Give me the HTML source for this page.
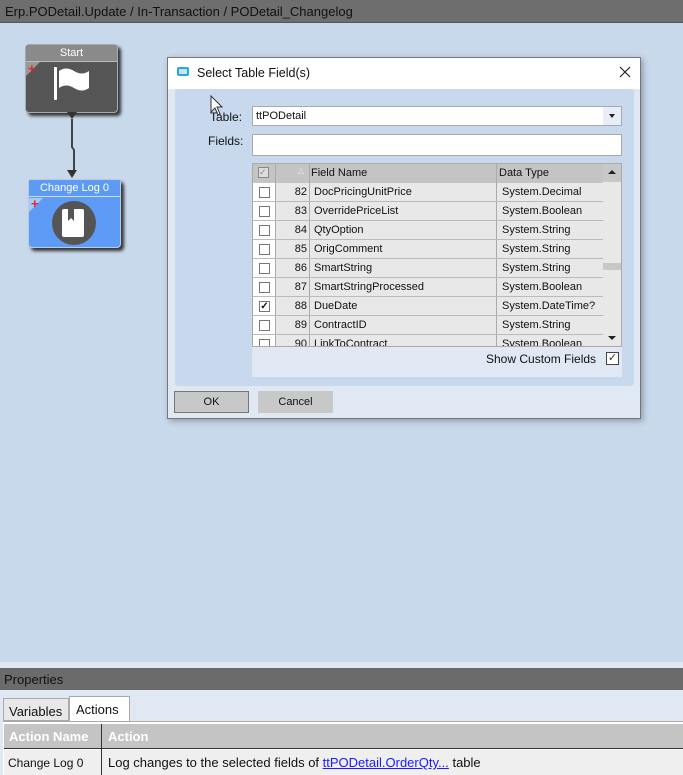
<!DOCTYPE html>
<html><head><style>
*{box-sizing:border-box;margin:0;padding:0}
body{width:683px;height:775px;overflow:hidden;background:#c9d9ec;font-family:"Liberation Sans",sans-serif;font-size:12px;color:#111;position:relative}
.a{position:absolute}
.cb{position:absolute;width:11px;height:11px;border:1px solid #777;background:#fff}
</style></head><body>
<div class="a" style="left:0;top:0;width:683px;height:23px;background:#6e6e6e;border-bottom:1px solid #555"></div>
<div class="a" style="left:5px;top:4px;font-size:13px;color:#111">Erp.PODetail.Update / In-Transaction / PODetail_Changelog</div>

<!-- Start node -->
<div class="a" style="left:25px;top:44px;width:93px;height:69px;background:#565656;border-radius:4px;border:1px solid #aaa;box-shadow:3px 3px 3px #333"></div>
<div class="a" style="left:26px;top:45px;width:91px;height:17px;background:#8a8a8a;border-radius:3px 3px 0 0;color:#fff;text-align:center;font-size:11px;line-height:17px;border-bottom:1px solid #bbb">Start</div>
<div class="a" style="left:26px;top:62px;width:0;height:0;border-top:14px solid #999;border-right:14px solid transparent"></div>
<div class="a" style="left:28px;top:62px;color:#e22;font-weight:bold;font-size:13px;line-height:13px">+</div>
<svg class="a" style="left:52px;top:64px" width="40" height="40"><rect x="2" y="3" width="3" height="33" fill="#fff" rx="1"/><path d="M7 7 Q14 2 22 7 T37 7 V24 Q30 29 22 24 T7 24Z" fill="#fff"/></svg>
<svg class="a" style="left:60px;top:112px" width="25" height="70"><path d="M7 0 L12 7 L17 0Z" fill="#333"/><path d="M12 7 V35 L14 38 V60" stroke="#444" stroke-width="2" fill="none"/><path d="M7 58 L12 66 L17 58Z" fill="#333"/></svg>

<!-- Change Log node -->
<div class="a" style="left:28px;top:179px;width:93px;height:69px;background:#5d9bf6;border-radius:4px;border:1px solid #bcd;box-shadow:3px 3px 3px #333"></div>
<div class="a" style="left:29px;top:180px;width:91px;height:17px;background:#5c9af4;color:#fff;text-align:center;font-size:11px;line-height:17px;border-bottom:1px solid #cde">Change Log 0</div>
<div class="a" style="left:29px;top:198px;width:0;height:0;border-top:14px solid #a8c8f8;border-right:14px solid transparent"></div>
<div class="a" style="left:31px;top:197px;color:#e22;font-weight:bold;font-size:13px;line-height:13px">+</div>
<div class="a" style="left:52px;top:201px;width:44px;height:44px;border-radius:50%;background:#555"></div>
<svg class="a" style="left:60px;top:208px" width="30" height="32"><rect x="2" y="1" width="22" height="28" fill="#fff" rx="2"/><path d="M8 1 V13 L11 10 L14 13 V1" fill="#555"/></svg>

<!-- Dialog -->
<div class="a" style="left:167px;top:57px;width:474px;height:362px;background:#dfe8f3;border:1px solid #777;box-shadow:2px 2px 6px rgba(0,0,0,.3)"></div>
<div class="a" style="left:168px;top:58px;width:472px;height:31px;background:#fff"></div>
<div class="a" style="left:177px;top:67px;width:12px;height:9px;border:2px solid #29a8e0;border-radius:2px;background:#bfe6f7"></div>
<div class="a" style="left:197px;top:66px;font-size:12.5px">Select Table Field(s)</div>
<svg class="a" style="left:619px;top:66px" width="12" height="12"><path d="M1 1 L11 11 M11 1 L1 11" stroke="#222" stroke-width="1.2"/></svg>
<div class="a" style="left:175px;top:89px;width:459px;height:297px;background:#c8d9ee;border-radius:3px"></div>
<div class="a" style="left:210px;top:110px;font-size:12px">Table:</div>
<div class="a" style="left:208px;top:134px;font-size:12px">Fields:</div>
<svg class="a" style="left:210px;top:95px" width="16" height="24"><path d="M1 1 V17 L5 13 L8 20 L10 19 L7 12 H12Z" fill="#fff" stroke="#333"/></svg>
<div class="a" style="left:252px;top:106px;width:370px;height:20px;background:#fff;border:1px solid #aaa"></div>
<div class="a" style="left:256px;top:110px;font-size:11px">ttPODetail</div>
<div class="a" style="left:603px;top:107px;width:18px;height:18px;background:#e8eef7"></div>
<div class="a" style="left:609px;top:114px;border-top:4px solid #222;border-left:3px solid transparent;border-right:3px solid transparent"></div>
<div class="a" style="left:252px;top:134px;width:370px;height:22px;background:#fff;border:1px solid #aaa"></div>

<!-- grid -->
<div class="a" style="left:252px;top:163px;width:370px;height:214px;background:#dfe8f3"></div>
<div class="a" style="left:252px;top:163px;width:370px;height:184px;background:#fff;border:1px solid #aaa"></div>
<div class="a" style="left:253px;top:164px;width:350px;height:19px;background:#c4c4c4"></div>
<div class="a" style="left:275px;top:164px;width:1px;height:19px;background:#aaa"></div>
<div class="a" style="left:309px;top:164px;width:1px;height:19px;background:#aaa"></div>
<div class="a" style="left:496px;top:164px;width:1px;height:19px;background:#aaa"></div>
<div class="cb" style="left:258px;top:167px;background:#ddd;border-color:#888;font-size:9px;line-height:9px;color:#888">✓</div>
<div class="a" style="left:298px;top:166px;font-size:8px;color:#eee">△</div>
<div class="a" style="left:311px;top:167px;font-size:11px">Field Name</div>
<div class="a" style="left:499px;top:167px;font-size:11px">Data Type</div>
<div class="a" style="left:603px;top:164px;width:18px;height:182px;background:#e8e8e8"></div>
<div class="a" style="left:603px;top:164px;width:18px;height:18px;background:#c8c8c8"></div>
<div class="a" style="left:608px;top:170px;border-bottom:4px solid #222;border-left:4px solid transparent;border-right:4px solid transparent"></div>
<div class="a" style="left:603px;top:263px;width:18px;height:7px;background:#c8c8c8"></div>
<div class="a" style="left:608px;top:336px;border-top:4px solid #222;border-left:4px solid transparent;border-right:4px solid transparent"></div>

<div class="a" style="left:253px;top:183px;width:350px;height:163px;overflow:hidden">
 <div style="position:absolute;left:0;top:0;width:22px;height:163px;background:#fff"></div>
 <div style="position:absolute;left:22px;top:0;width:328px;height:163px;background:#e8e8e8"></div>
 <div style="position:absolute;left:22px;top:0;width:1px;height:163px;background:#aaa"></div>
 <div style="position:absolute;left:56px;top:0;width:1px;height:163px;background:#aaa"></div>
 <div style="position:absolute;left:243px;top:0;width:1px;height:163px;background:#aaa"></div>
</div>
<div class="a" style="left:253px;top:183px;width:350px;height:163px;overflow:hidden;font-size:11px">
<div style="position:absolute;top:0;left:0;width:350px;height:19px;border-bottom:1px solid #bbb"><div class="cb" style="left:6px;top:4px"></div><span class="a" style="right:296px;top:3px">82</span><span class="a" style="left:61px;top:3px">DocPricingUnitPrice</span><span class="a" style="left:249px;top:3px">System.Decimal</span></div>
<div style="position:absolute;top:19px;left:0;width:350px;height:19px;border-bottom:1px solid #bbb"><div class="cb" style="left:6px;top:4px"></div><span class="a" style="right:296px;top:3px">83</span><span class="a" style="left:61px;top:3px">OverridePriceList</span><span class="a" style="left:249px;top:3px">System.Boolean</span></div>
<div style="position:absolute;top:38px;left:0;width:350px;height:19px;border-bottom:1px solid #bbb"><div class="cb" style="left:6px;top:4px"></div><span class="a" style="right:296px;top:3px">84</span><span class="a" style="left:61px;top:3px">QtyOption</span><span class="a" style="left:249px;top:3px">System.String</span></div>
<div style="position:absolute;top:57px;left:0;width:350px;height:19px;border-bottom:1px solid #bbb"><div class="cb" style="left:6px;top:4px"></div><span class="a" style="right:296px;top:3px">85</span><span class="a" style="left:61px;top:3px">OrigComment</span><span class="a" style="left:249px;top:3px">System.String</span></div>
<div style="position:absolute;top:76px;left:0;width:350px;height:19px;border-bottom:1px solid #bbb"><div class="cb" style="left:6px;top:4px"></div><span class="a" style="right:296px;top:3px">86</span><span class="a" style="left:61px;top:3px">SmartString</span><span class="a" style="left:249px;top:3px">System.String</span></div>
<div style="position:absolute;top:95px;left:0;width:350px;height:19px;border-bottom:1px solid #bbb"><div class="cb" style="left:6px;top:4px"></div><span class="a" style="right:296px;top:3px">87</span><span class="a" style="left:61px;top:3px">SmartStringProcessed</span><span class="a" style="left:249px;top:3px">System.Boolean</span></div>
<div style="position:absolute;top:114px;left:0;width:350px;height:19px;border-bottom:1px solid #bbb"><div class="cb" style="left:6px;top:4px;font-size:10px;line-height:9px;text-align:center;font-weight:bold">✓</div><span class="a" style="right:296px;top:3px">88</span><span class="a" style="left:61px;top:3px">DueDate</span><span class="a" style="left:249px;top:3px">System.DateTime?</span></div>
<div style="position:absolute;top:133px;left:0;width:350px;height:19px;border-bottom:1px solid #bbb"><div class="cb" style="left:6px;top:4px"></div><span class="a" style="right:296px;top:3px">89</span><span class="a" style="left:61px;top:3px">ContractID</span><span class="a" style="left:249px;top:3px">System.String</span></div>
<div style="position:absolute;top:152px;left:0;width:350px;height:19px"><div class="cb" style="left:6px;top:4px"></div><span class="a" style="right:296px;top:3px">90</span><span class="a" style="left:61px;top:3px">LinkToContract</span><span class="a" style="left:249px;top:3px">System.Boolean</span></div>
</div>
<div class="a" style="left:486px;top:352px;font-size:12px">Show Custom Fields</div>
<div class="cb" style="left:606px;top:352px;width:13px;height:13px;border-color:#444;font-size:11px;line-height:11px;text-align:center;color:#333">✓</div>

<div class="a" style="left:174px;top:391px;width:75px;height:22px;background:#c8c8c8;border:1px solid #777;text-align:center;line-height:20px;font-size:11px">OK</div>
<div class="a" style="left:258px;top:391px;width:75px;height:22px;background:#c8c8c8;text-align:center;line-height:22px;font-size:11px">Cancel</div>

<!-- bottom -->
<div class="a" style="left:0;top:662px;width:683px;height:113px;background:#dfe8f3"></div>
<div class="a" style="left:0;top:668px;width:683px;height:22px;background:#6b6b6b"></div>
<div class="a" style="left:4px;top:672px;font-size:13px;color:#111">Properties</div>
<div class="a" style="left:3px;top:698px;width:66px;height:23px;background:#e8e8e8;border:1px solid #aaa;font-size:13px;padding:5px 0 0 5px">Variables</div>
<div class="a" style="left:69px;top:696px;width:61px;height:26px;background:#fff;border:1px solid #aaa;border-bottom:none;font-size:13px;padding:5px 0 0 6px">Actions</div>
<div class="a" style="left:3px;top:721px;width:680px;height:54px;background:#fff;border-top:1px solid #aaa"></div>
<div class="a" style="left:4px;top:724px;width:679px;height:25px;background:#c4c4c4;border-bottom:1px solid #333"></div>
<div class="a" style="left:101px;top:724px;width:1px;height:51px;background:#333"></div>
<div class="a" style="left:9px;top:729px;font-size:13px;font-weight:bold;color:#fff">Action Name</div>
<div class="a" style="left:108px;top:729px;font-size:13px;font-weight:bold;color:#fff">Action</div>
<div class="a" style="left:4px;top:750px;width:679px;height:25px;background:#efefef"></div>
<div class="a" style="left:101px;top:750px;width:1px;height:25px;background:#333"></div>
<div class="a" style="left:8px;top:756px;font-size:12px">Change Log 0</div>
<div class="a" style="left:108px;top:755px;font-size:13px">Log changes to the selected fields of <span style="color:#1a1aff;text-decoration:underline">ttPODetail.OrderQty...</span> table</div>
</body></html>
